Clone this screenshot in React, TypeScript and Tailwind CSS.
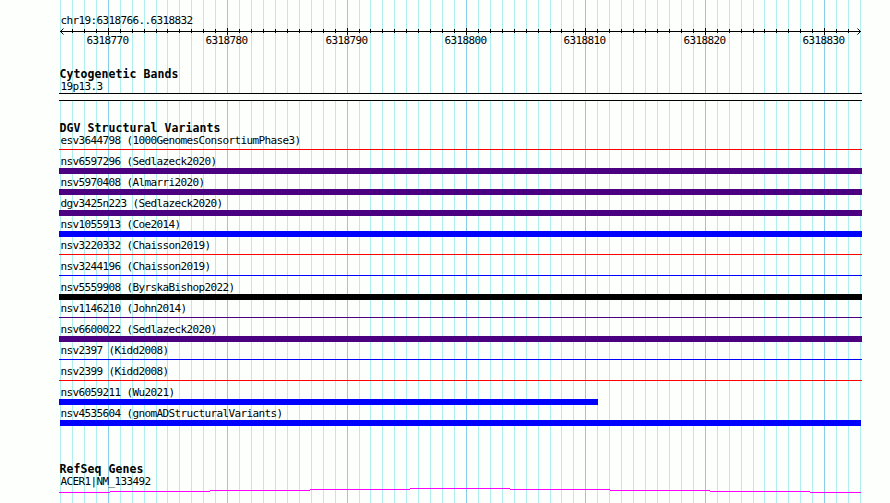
type Variant = {
  id: string
  study: string
  color: string
  thick?: boolean
  span?: string
}

const variants: Variant[] = [
  { id: 'esv3644798', study: '1000GenomesConsortiumPhase3', color: 'bg-[#ff0000]' },
  { id: 'nsv6597296', study: 'Sedlazeck2020', color: 'bg-[#4b0082]', thick: true },
  { id: 'nsv5970408', study: 'Almarri2020', color: 'bg-[#4b0082]', thick: true },
  { id: 'dgv3425n223', study: 'Sedlazeck2020', color: 'bg-[#4b0082]', thick: true },
  { id: 'nsv1055913', study: 'Coe2014', color: 'bg-[#0000ff]', thick: true },
  { id: 'nsv3220332', study: 'Chaisson2019', color: 'bg-[#ff0000]' },
  { id: 'nsv3244196', study: 'Chaisson2019', color: 'bg-[#0000ff]' },
  { id: 'nsv5559908', study: 'ByrskaBishop2022', color: 'bg-black', thick: true },
  { id: 'nsv1146210', study: 'John2014', color: 'bg-[#4b0082]' },
  { id: 'nsv6600022', study: 'Sedlazeck2020', color: 'bg-[#4b0082]', thick: true },
  { id: 'nsv2397', study: 'Kidd2008', color: 'bg-[#0000ff]' },
  { id: 'nsv2399', study: 'Kidd2008', color: 'bg-[#ff0000]' },
  { id: 'nsv6059211', study: 'Wu2021', color: 'bg-[#0000ff]', thick: true, span: 'w-[539px]' },
  {
    id: 'nsv4535604',
    study: 'gnomADStructuralVariants',
    color: 'bg-[#0000ff]',
    thick: true,
    span: 'ml-px w-[801px]',
  },
]

const START = 6318766
const BASES = 67

const ticks = Array.from({ length: BASES + 1 }, (_, i) => ({
  position: START + i,
  x: 60 + Math.round((i * 800) / BASES),
  major: (START + i) % 10 === 0,
}))

const geneSegments = [
  { x: 0, width: 51, y: 4 },
  { x: 51, width: 100, y: 3 },
  { x: 151, width: 100, y: 2 },
  { x: 251, width: 100, y: 1 },
  { x: 351, width: 100, y: 0 },
  { x: 451, width: 100, y: 1 },
  { x: 551, width: 100, y: 2 },
  { x: 651, width: 100, y: 3 },
  { x: 751, width: 51, y: 4 },
]

const Gridlines = () => (
  <svg width="890" height="503" shapeRendering="crispEdges" className="[grid-area:1/1]">
    {ticks.map(tick => (
      <rect
        key={tick.position}
        x={tick.x}
        y="0"
        width="1"
        height="503"
        fill={tick.major ? '#87ceeb' : '#afeeee'}
      />
    ))}
  </svg>
)

const Ruler = () => (
  <svg width="890" height="22" className="block">
    <g shapeRendering="crispEdges">
      <rect x="60" y="4" width="801" height="1" />
      {ticks.slice(1, -1).map(tick => (
        <rect
          key={tick.position}
          x={tick.x}
          y={tick.major ? 1 : 2}
          width="1"
          height={tick.major ? 7 : 4}
        />
      ))}
    </g>
    <path d="M63.5 1.5L60.5 4.5L63.5 7.5M857.5 1.5L860.5 4.5L857.5 7.5" fill="none" stroke="#000" />
    {ticks
      .filter(tick => tick.major)
      .map(tick => (
        <text key={tick.position} x={tick.x - 21.5} y="17">
          {tick.position}
        </text>
      ))}
  </svg>
)

const Heading = ({ children }: { children: string }) => (
  <h2 className="h-[13px] pl-[0.5px] text-[11.5px] leading-[13px] font-bold tracking-[0.077px]">
    {children}
  </h2>
)

const Label = ({ children }: { children: string }) => (
  <p className="h-3 pl-[1.5px] leading-3">{children}</p>
)

const App = () => {
  return (
    <main className="grid h-[503px] w-[890px] overflow-hidden bg-[#fdfffc] font-['DejaVu_Sans_Mono',monospace] text-[11px] tracking-[-0.623px] whitespace-nowrap text-black">
      <Gridlines />
      <div className="flex flex-col [grid-area:1/1]">
        <header className="pt-[15px]">
          <div className="pl-[59px]">
            <Label>chr19:6318766..6318832</Label>
          </div>
          <Ruler />
        </header>

        <section className="mt-[19px] w-[862px] pl-[59px]">
          <Heading>Cytogenetic Bands</Heading>
          <Label>19p13.3</Label>
          <div className="h-2 border-y border-black bg-[#fdfffc]" />
        </section>

        <section className="mt-[21px] w-[862px] pl-[59px]">
          <Heading>DGV Structural Variants</Heading>
          {variants.map(variant => (
            <div key={variant.id} className="h-[21px]">
              <Label>{`${variant.id} (${variant.study})`}</Label>
              <div
                className={`${variant.color} ${variant.thick ? 'h-1.5' : 'mt-0.5 h-px'} ${variant.span ?? 'w-full'}`}
              />
            </div>
          ))}
        </section>

        <section className="mt-[34px] pl-[59px]">
          <Heading>RefSeq Genes</Heading>
          <Label>ACER1|NM_133492</Label>
          <svg width="803" height="5" shapeRendering="crispEdges" className="block">
            {geneSegments.map(segment => (
              <rect key={segment.x} {...segment} height="1" fill="#ff00ff" />
            ))}
          </svg>
        </section>
      </div>
    </main>
  )
}

export default App
